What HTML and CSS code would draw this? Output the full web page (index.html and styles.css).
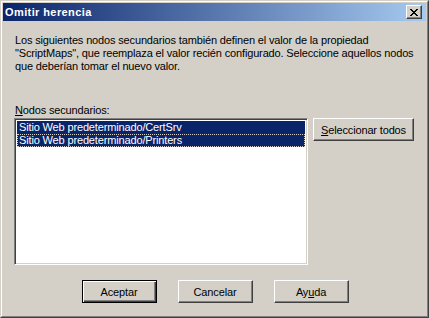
FILE: index.html
```html
<!DOCTYPE html>
<html lang="es">
<head>
  <meta charset="UTF-8">
  <title>Omitir herencia</title>
  <link rel="stylesheet" href="styles.css">
</head>
<body>
  <div class="window">
    <div class="frame">
      <div class="titlebar">
        <span class="title">Omitir herencia</span>
        <button class="close" aria-label="Cerrar">
          <svg width="8" height="7" viewBox="0 0 8 7" shape-rendering="crispEdges">
            <path d="M0 0h2v1h-2zM6 0h2v1h-2zM1 1h2v1h-2zM5 1h2v1h-2zM2 2h4v1h-4zM3 3h2v1h-2zM2 4h4v1h-4zM1 5h2v1h-2zM5 5h2v1h-2zM0 6h2v1h-2zM6 6h2v1h-2z" fill="#000"/>
          </svg>
        </button>
      </div>
      <div class="content">
        <p class="intro">Los siguientes nodos secundarios también definen el valor de la propiedad<br>"ScriptMaps", que reemplaza el valor recién configurado. Seleccione aquellos nodos<br>que deberían tomar el nuevo valor.</p>
        <label class="list-label" for="nodes"><u>N</u>odos secundarios:</label>
        <div class="list-row">
          <div class="listbox" id="nodes">
            <div class="item selected">Sitio Web predeterminado/CertSrv</div>
            <div class="item selected focus">Sitio Web predeterminado/Printers</div>
          </div>
          <button class="btn select-all"><u>S</u>eleccionar todos</button>
        </div>
        <div class="actions">
          <button class="btn default">Aceptar</button>
          <button class="btn">Cancelar</button>
          <button class="btn">Ay<u>u</u>da</button>
        </div>
      </div>
    </div>
  </div>
</body>
</html>
```

FILE: styles.css
```css
body {
  margin: 0;
  font-family: "Liberation Sans", Arial, sans-serif;
  font-size: 11px;
  letter-spacing: -0.15px;
  color: #000;
}
.window {
  width: 429px;
  height: 318px;
  box-sizing: border-box;
  border: 1px solid;
  border-color: #d4d0c8 #404040 #404040 #d4d0c8;
  background: #d4d0c8;
}
.frame {
  height: 100%;
  box-sizing: border-box;
  border: 1px solid;
  border-color: #fff #808080 #808080 #fff;
  padding: 1px;
  display: flex;
  flex-direction: column;
}
.titlebar {
  height: 18px;
  display: flex;
  align-items: center;
  justify-content: space-between;
  padding: 0 2px 0 2px;
  background: linear-gradient(to right, #0a246a, #a6caf0);
}
.title {
  color: #fff;
  font-weight: bold;
  font-size: 11px;
  letter-spacing: 0.4px;
}
.close {
  width: 16px;
  height: 14px;
  padding: 0;
  margin-right: 2px;
  display: flex;
  align-items: center;
  justify-content: center;
  background: #d4d0c8;
  border: 1px solid;
  border-color: #fff #404040 #404040 #fff;
  box-shadow: inset -1px -1px #808080;
}
.content {
  flex: 1;
  padding: 13px 11px 0 11px;
}
.intro {
  margin: 0 0 0 1px;
  line-height: 13px;
  white-space: nowrap;
}
.list-label {
  display: block;
  margin: 31px 0 1px 1px;
  line-height: 13px;
}
.list-row {
  display: flex;
  align-items: flex-start;
  gap: 5px;
}
.listbox {
  width: 294px;
  height: 147px;
  box-sizing: border-box;
  background: #fff;
  border: 1px solid;
  border-color: #808080 #fff #fff #808080;
  box-shadow: inset 1px 1px #404040, inset -1px -1px #d4d0c8;
  padding: 2px 2px;
}
.item {
  height: 13px;
  line-height: 13px;
  padding-left: 2px;
  white-space: nowrap;
}
.item.selected {
  background: #0a246a;
  color: #fff;
}
.item.focus {
  outline: 1px dotted #d4d0c8;
  outline-offset: -1px;
}
.btn {
  height: 23px;
  width: 75px;
  padding: 0;
  font: inherit;
  letter-spacing: inherit;
  color: #000;
  background: #d4d0c8;
  border: 1px solid;
  border-color: #fff #404040 #404040 #fff;
  box-shadow: inset -1px -1px #808080;
}
.select-all {
  width: 101px;
}
.btn.default {
  border-color: #000;
  box-shadow: inset 1px 1px #fff, inset -1px -1px #404040, inset -2px -2px #808080;
}
.actions {
  display: flex;
  justify-content: center;
  gap: 21px;
  margin-top: 15px;
  padding-left: 1px;
}
```
